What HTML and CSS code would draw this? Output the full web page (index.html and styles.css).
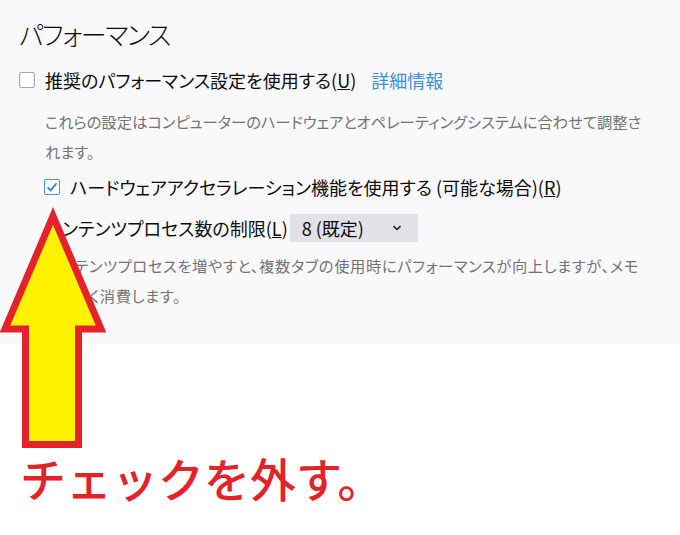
FILE: index.html
```html
<!DOCTYPE html>
<html lang="ja">
<head>
    <meta charset="UTF-8">
    <meta name="viewport" content="width=device-width, initial-scale=1.0">
    <title>パフォーマンス</title>
    <link rel="stylesheet" href="styles.css">
</head>
<body>
    <section class="panel">
        <h1 class="title">パフォーマンス</h1>

        <label class="option">
            <span class="check"></span>
            <span>推奨のパフォーマンス設定を使用する(<u>U</u>)</span>
            <a class="more" href="#">詳細情報</a>
        </label>
        <p class="note">これらの設定はコンピューターのハードウェアとオペレーティングシステムに合わせて調整さ<br>れます。</p>

        <div class="sub">
            <label class="option">
                <span class="check checked">
                    <svg width="12" height="12" viewBox="0 0 12 12">
                        <path d="M1.6 6.3 L4.7 9.4 L10.6 2.2" fill="none" stroke="#2f7fd0" stroke-width="1.8"/>
                    </svg>
                </span>
                <span>ハードウェアアクセラレーション機能を使用する (可能な場合)(<u>R</u>)</span>
            </label>

            <div class="option limit">
                <span>コンテンツプロセス数の制限(<u>L</u>)</span>
                <div class="select">
                    <span>8 (既定)</span>
                    <svg width="10" height="6" viewBox="0 0 10 6">
                        <path d="M1.5 1.2 L5 4.5 L8.5 1.2" fill="none" stroke="#222" stroke-width="1.6"/>
                    </svg>
                </div>
            </div>
            <p class="note wide">コンテンツプロセスを増やすと、複数タブの使用時にパフォーマンスが向上しますが、メモ<br>リを多く消費します。</p>
        </div>
    </section>

    <!-- big pointer to the checkbox -->
    <svg class="arrow" width="112" height="252" viewBox="0 0 112 252">
        <polygon points="53,16 101,129 78.5,129 78.5,244.5 25.5,244.5 25.5,129 5,129"
                 fill="#fff200" stroke="#e3222a" stroke-width="7" stroke-linejoin="miter"/>
    </svg>

    <p class="caption">チェックを外す。</p>
</body>
</html>
```

FILE: styles.css
```css
body {
    margin: 0;
    width: 680px;
    height: 535px;
    overflow: hidden;
    position: relative;
    background: #fff;
    font-family: "Noto Sans CJK JP", sans-serif;
    color: #0c0c0d;
}

.panel {
    background: #f9f9fb;
    height: 344px;
    box-sizing: border-box;
    padding: 16px 20px 0 19px;
}

.title {
    margin: 0 0 3px;
    font-size: 26px;
    font-weight: 300;
    line-height: 36px;
    letter-spacing: -1.5px;
    font-feature-settings: "palt";
}

.option {
    display: flex;
    align-items: center;
    height: 28px;
    font-size: 18px;
    font-feature-settings: "palt";
    white-space: nowrap;
}

.panel > .option {
    margin-top: 14px;
}

.check {
    width: 16px;
    height: 16px;
    box-sizing: border-box;
    border: 1px solid #a4a4ad;
    border-radius: 2px;
    background: #fff;
    margin-right: 10px;
    display: flex;
    align-items: center;
    justify-content: center;
    flex-shrink: 0;
}

.check.checked {
    border-color: #4b8fd6;
}

.more {
    color: #3d8fd6;
    text-decoration: none;
    margin-left: 15px;
}

.note {
    margin: 12px 0 0 26px;
    font-size: 15.3px;
    line-height: 30px;
    color: #737373;
    white-space: nowrap;
    font-feature-settings: "palt";
}

.note.wide {
    letter-spacing: 0.6px;
}

.sub {
    margin-left: 25px;
}

.sub > .option:first-child {
    margin-top: 7px;
}

.sub .note {
    margin: 8px 0 0 1px;
}

.limit {
    margin-top: 13px;
    padding-left: 1px;
}

.select {
    margin-left: 2px;
    width: 128px;
    height: 28px;
    box-sizing: border-box;
    padding: 0 16px 0 12px;
    background: #e1e1e6;
    border-radius: 2px;
    display: flex;
    align-items: center;
    justify-content: space-between;
}

.arrow {
    position: absolute;
    left: 0;
    top: 200px;
}

.caption {
    margin: 0;
    position: absolute;
    left: 20px;
    top: 449px;
    font-size: 46px;
    font-weight: 500;
    line-height: 56px;
    color: #e3222a;
}
```
